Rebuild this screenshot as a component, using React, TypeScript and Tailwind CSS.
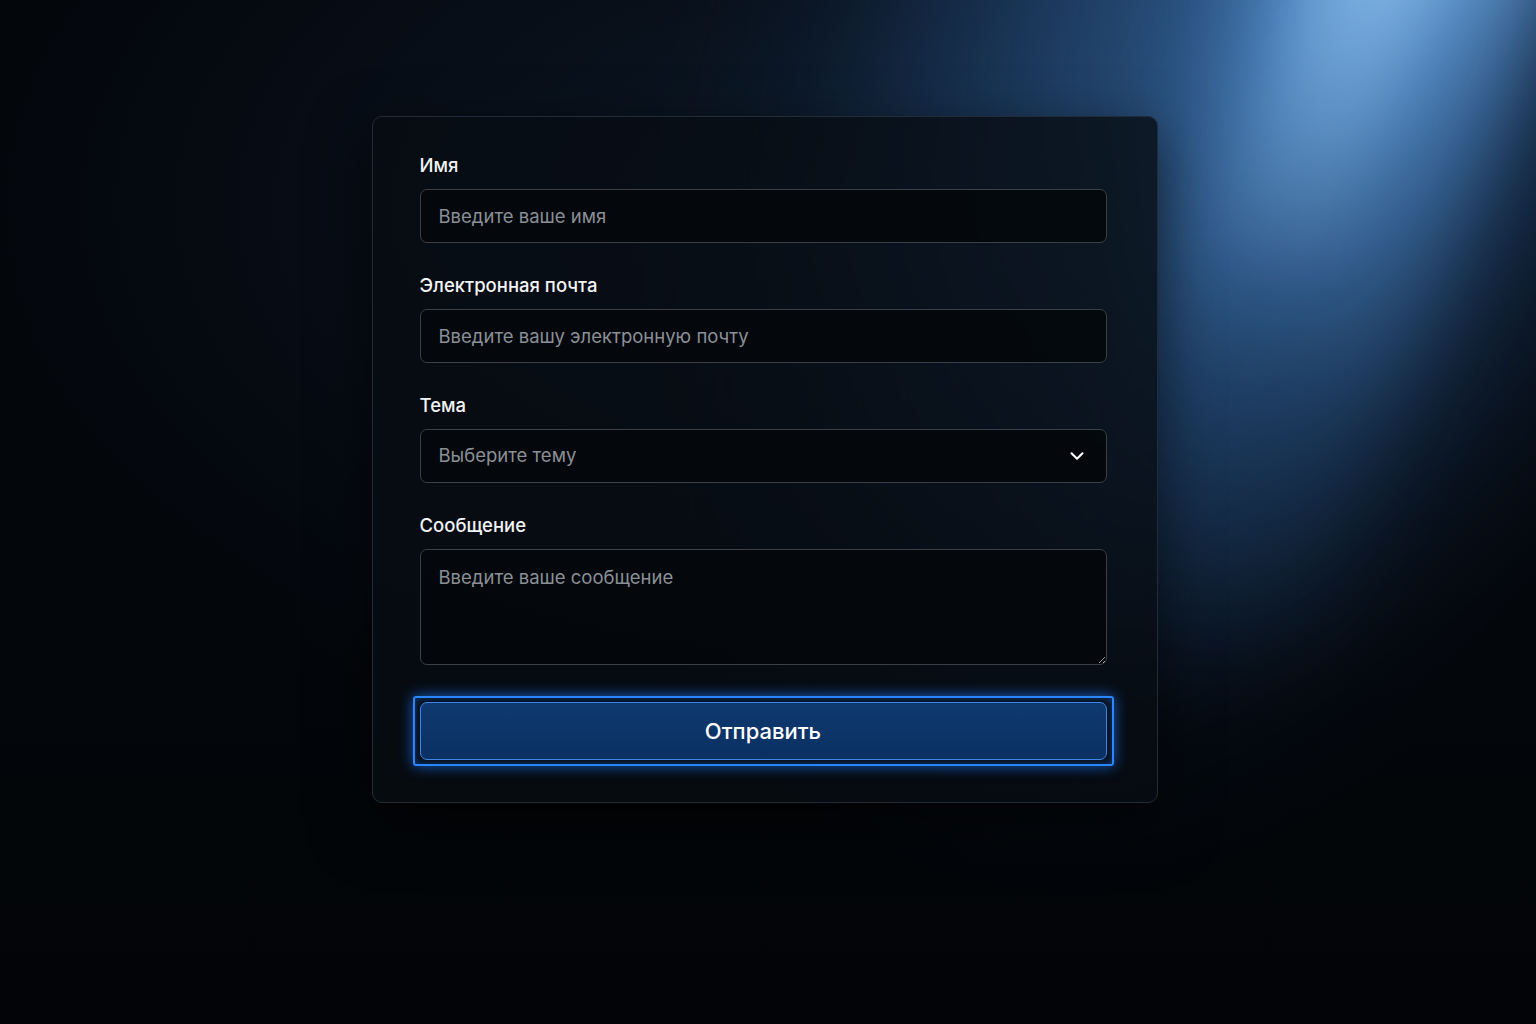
import { ChevronDown } from 'lucide-react';

const labelClass = 'mb-[12px] block text-[18.5px] leading-6 font-medium text-[#f1f3f6]';
const fieldClass =
  'h-[54px] w-full rounded-[7px] border border-[#3b4048] bg-[#04070b]/85 px-[18px] text-[18.5px] text-[#e6e8eb] placeholder:text-[#8b9097] focus:outline-none';

export default function App() {
  return (
    <div
      className="relative min-h-screen w-full overflow-hidden bg-[#03060a]"
      style={{ fontFamily: 'Inter, "Noto Sans", "Liberation Sans", sans-serif' }}
    >
      {/* background light */}
      <div className="pointer-events-none absolute inset-0 bg-[radial-gradient(ellipse_60%_55%_at_55%_20%,#0c1826_0%,#070d16_55%,transparent_100%)]" />
      <div className="pointer-events-none absolute inset-0 bg-[linear-gradient(to_bottom,transparent_60%,#020407_100%)]" />
      <div className="pointer-events-none absolute left-[700px] top-[-580px] h-[1450px] w-[1020px] rotate-[24deg] rounded-full bg-[radial-gradient(ellipse_at_50%_35%,rgba(62,120,185,0.78)_0%,rgba(38,82,135,0.48)_38%,rgba(20,45,80,0.18)_60%,transparent_75%)] blur-2xl" />
      <div className="pointer-events-none absolute left-[1180px] top-[-280px] h-[980px] w-[270px] rotate-[20deg] rounded-full bg-[linear-gradient(to_bottom,rgba(125,180,235,0.95)_0%,rgba(85,145,210,0.7)_35%,rgba(45,95,150,0.28)_70%,transparent_100%)] blur-[45px]" />
      <div className="pointer-events-none absolute left-[1275px] top-[-120px] h-[420px] w-[120px] rotate-[20deg] rounded-full bg-[linear-gradient(to_bottom,rgba(150,200,245,0.75),transparent)] blur-[30px]" />

      <div className="relative flex justify-center pt-[116px]">
        <div className="mr-[7px] w-[786px] rounded-[10px] border border-[#222c38] bg-[#080c13]/80 pb-[36px] pl-[47px] pr-[50px] pt-[36px] shadow-[0_20px_60px_rgba(0,0,0,0.6)]">
          <form className="flex flex-col gap-[30px]" onSubmit={(e) => e.preventDefault()}>
            <div>
              <label className={labelClass}>Имя</label>
              <input type="text" placeholder="Введите ваше имя" className={fieldClass} />
            </div>

            <div>
              <label className={labelClass}>Электронная почта</label>
              <input type="email" placeholder="Введите вашу электронную почту" className={fieldClass} />
            </div>

            <div>
              <label className={labelClass}>Тема</label>
              <button type="button" className={`${fieldClass} flex items-center justify-between pr-[18px] text-left`}>
                <span className="text-[#8b9097]">Выберите тему</span>
                <ChevronDown size={22} strokeWidth={2.25} className="text-white" />
              </button>
            </div>

            <div>
              <label className={labelClass}>Сообщение</label>
              <textarea
                placeholder="Введите ваше сообщение"
                className="block h-[116px] w-full resize-y rounded-[7px] border border-[#3b4048] bg-[#04070b]/85 px-[18px] pt-[14px] text-[18.5px] text-[#e6e8eb] [color-scheme:dark] placeholder:text-[#8b9097] focus:outline-none"
              />
            </div>

            <div className="mx-[-7px] mt-px rounded-[3px] border-2 border-[#2a86ff] px-[5px] py-[4px] shadow-[0_0_14px_rgba(30,120,255,0.75),inset_0_0_8px_rgba(30,120,255,0.45)]">
              <button
                type="submit"
                className="h-[58px] w-full rounded-[7px] border border-[#3d86e8] bg-[linear-gradient(to_bottom,#0e3a70,#0b3062)] text-[22px] font-medium text-white"
              >
                Отправить
              </button>
            </div>
          </form>
        </div>
      </div>
    </div>
  );
}
